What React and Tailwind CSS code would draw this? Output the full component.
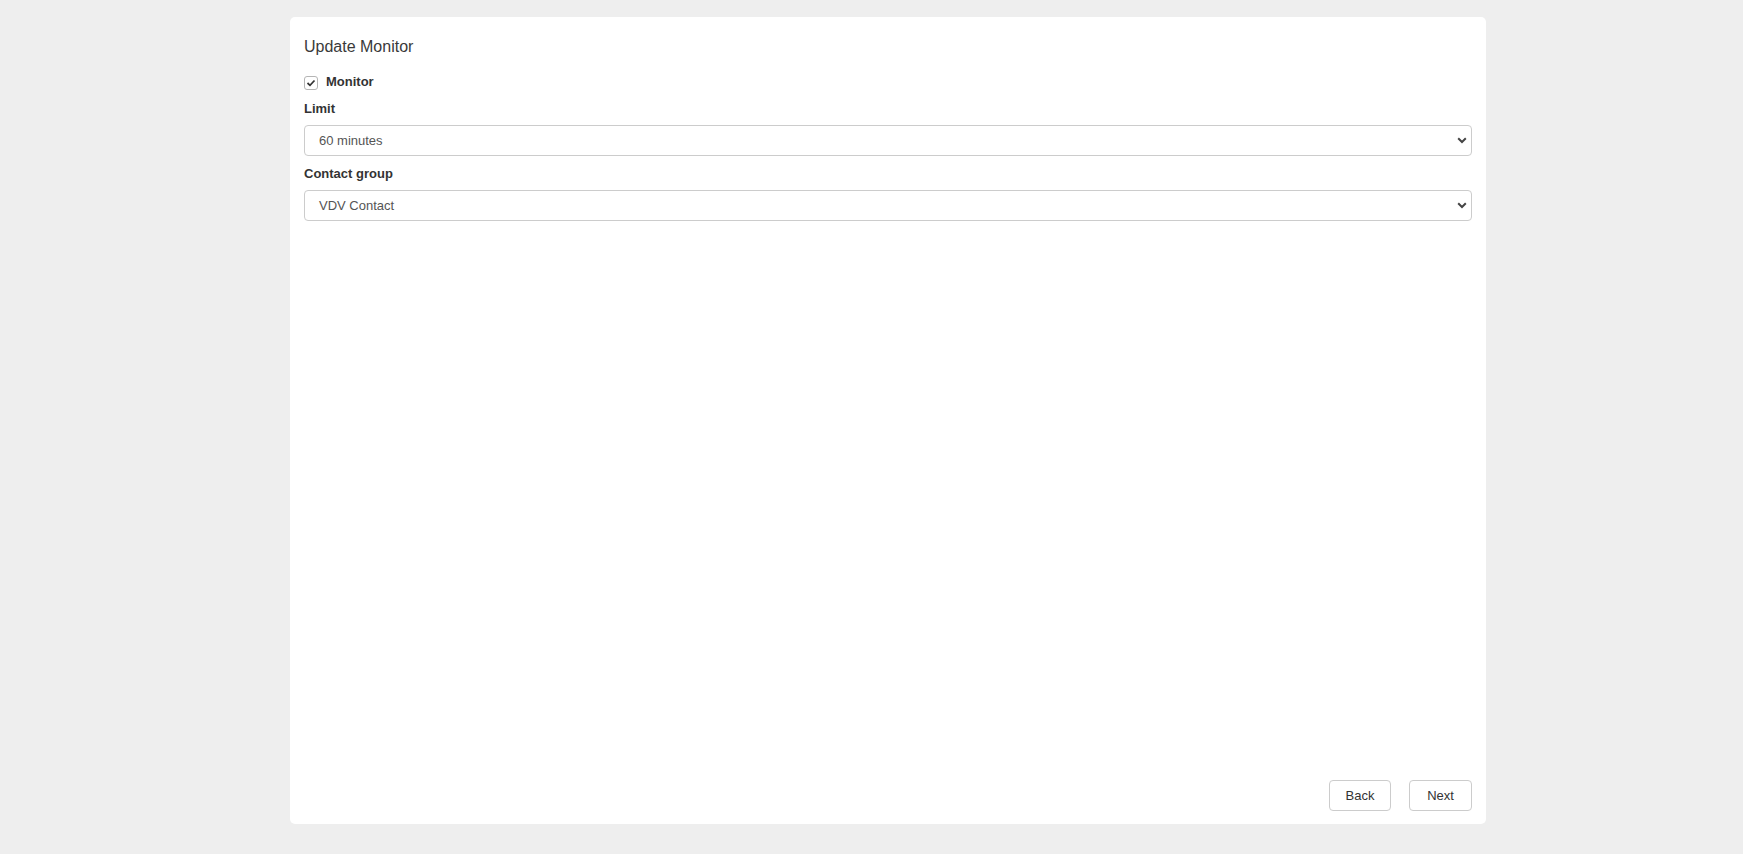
import React from 'react';

function Chevron() {
  return (
    <svg width="10" height="7" viewBox="0 0 10 7" className="shrink-0">
      <polyline points="1.2,1.3 5,5 8.8,1.3" fill="none" stroke="#444" strokeWidth="2" />
    </svg>
  );
}

function SelectBox({ value }) {
  return (
    <div className="mt-[7px] h-[31px] w-full flex items-center justify-between border border-[#cccccc] rounded-[4px] bg-white pl-[14px] pr-[4px] text-[13px] text-[#555555]">
      <span>{value}</span>
      <Chevron />
    </div>
  );
}

export default function App() {
  return (
    <div className="min-h-screen bg-[#eeeeee] pt-[17px] font-['Liberation_Sans',Arial,sans-serif]">
      <div className="ml-[290px] w-[1196px] h-[807px] bg-white rounded-[5px] flex flex-col px-[14px] pt-[20px] pb-[13px]">
        {/* Header */}
        <h1 className="h-[20px] leading-[20px] text-[16px] text-[#3a3a3a]">Update Monitor</h1>

        {/* Monitor checkbox */}
        <label className="mt-[15px] h-[18px] flex items-start gap-[8px]">
          <span className="mt-[4px] w-[14px] h-[14px] border border-[#b5b5b5] rounded-[3px] flex items-center justify-center bg-white">
            <svg width="10" height="8" viewBox="0 0 10 8">
              <polyline points="1.5,4 4,6.3 8.5,1.5" fill="none" stroke="#333" strokeWidth="1.7" />
            </svg>
          </span>
          <span className="leading-[18px] text-[13px] font-bold text-[#333333] mt-[1px]">Monitor</span>
        </label>

        {/* Limit */}
        <div className="mt-[10px] h-[18px] leading-[18px] text-[13px] font-bold text-[#333333]">Limit</div>
        <SelectBox value="60 minutes" />

        {/* Contact group */}
        <div className="mt-[9px] h-[18px] leading-[18px] text-[13px] font-bold text-[#333333]">Contact group</div>
        <SelectBox value="VDV Contact" />

        {/* Footer */}
        <div className="mt-auto flex justify-end gap-[18px]">
          <button className="w-[62px] h-[31px] border border-[#cccccc] rounded-[4px] bg-white text-[13px] text-[#333333]">Back</button>
          <button className="w-[63px] h-[31px] border border-[#cccccc] rounded-[4px] bg-white text-[13px] text-[#333333]">Next</button>
        </div>
      </div>
    </div>
  );
}
